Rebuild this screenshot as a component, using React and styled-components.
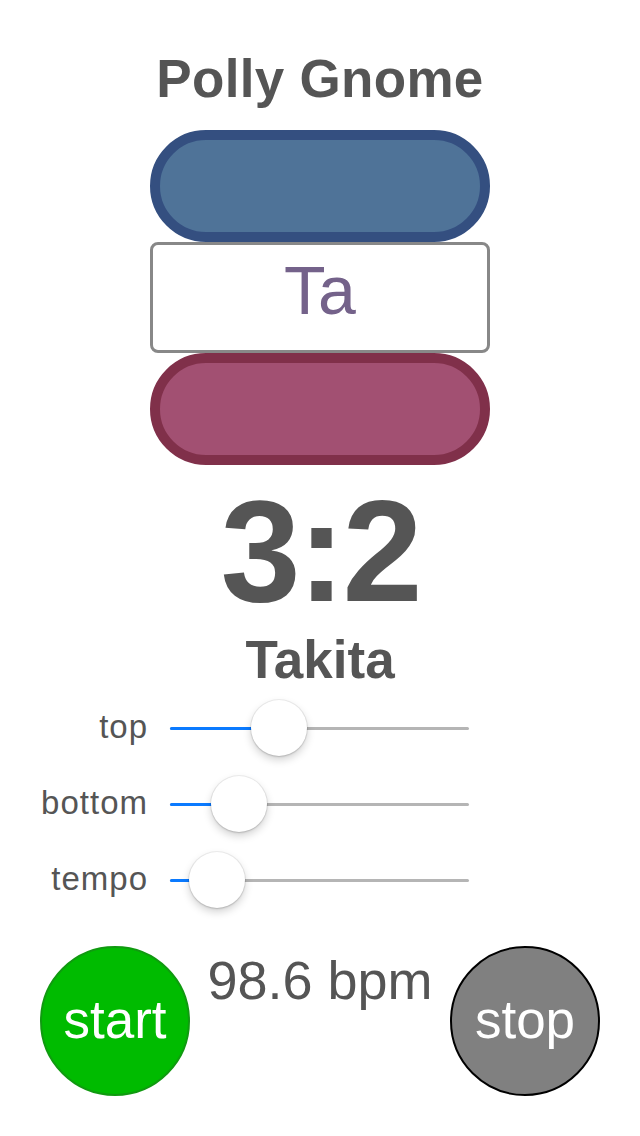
import React, { useState } from "react";
import styled, { createGlobalStyle } from "styled-components";

const GlobalStyle = createGlobalStyle`
  html, body {
    margin: 0;
    padding: 0;
    background: #ffffff;
  }
  body {
    font-family: "Liberation Sans", Arial, sans-serif;
  }
`;

const Screen = styled.div`
  width: 640px;
  height: 1136px;
  display: flex;
  flex-direction: column;
  align-items: center;
  box-sizing: border-box;
  padding-top: 52px;
  overflow: hidden;
`;

const Title = styled.h1`
  margin: 0;
  font-size: 53px;
  line-height: 53px;
  font-weight: bold;
  color: #555555;
  letter-spacing: 0.3px;
`;

const Stack = styled.div`
  width: 340px;
  margin-top: 25px;
  display: flex;
  flex-direction: column;
`;

const Pill = styled.div`
  height: 112px;
  box-sizing: border-box;
  border-radius: 56px;
  border: 10px solid ${(props) => props.edge};
  background: ${(props) => props.fill};
`;

const SyllableBox = styled.div`
  height: 111px;
  box-sizing: border-box;
  border: 3px solid #888888;
  border-radius: 8px;
  padding-top: 11px;
  text-align: center;
  font-size: 68px;
  line-height: 68px;
  color: #74628a;
`;

const Ratio = styled.div`
  margin-top: 15px;
  font-size: 144px;
  line-height: 144px;
  font-weight: bold;
  color: #555555;
  letter-spacing: -3px;
`;

const PatternName = styled.div`
  margin-top: 9px;
  font-size: 53px;
  line-height: 53px;
  font-weight: bold;
  color: #555555;
`;

const Sliders = styled.div`
  margin-top: 4px;
  width: 640px;
  display: flex;
  flex-direction: column;
`;

const SliderRow = styled.div`
  height: 76px;
  display: grid;
  grid-template-columns: 148px 299px;
  column-gap: 22px;
  align-items: center;
`;

const SliderLabel = styled.span`
  text-align: right;
  font-size: 33px;
  line-height: 33px;
  letter-spacing: 1px;
  color: #555555;
  margin-top: -4px;
`;

const Track = styled.div`
  position: relative;
  height: 3px;
  border-radius: 2px;
  background: #b5b5b5;
`;

const TrackFill = styled.div`
  position: absolute;
  left: 0;
  top: 0;
  height: 3px;
  border-radius: 2px;
  background: #0a7aff;
`;

const Thumb = styled.div`
  position: absolute;
  top: -27px;
  width: 56px;
  height: 56px;
  margin-left: -28px;
  border-radius: 50%;
  background: #ffffff;
  box-shadow: 0 0 0 1px rgba(0, 0, 0, 0.06), 0 4px 8px rgba(0, 0, 0, 0.18),
    0 1px 2px rgba(0, 0, 0, 0.12);
`;

const Controls = styled.div`
  margin-top: 28px;
  width: 640px;
  box-sizing: border-box;
  padding: 0 40px;
  display: flex;
  justify-content: space-between;
  align-items: flex-start;
`;

const RoundButton = styled.button`
  width: 150px;
  height: 150px;
  box-sizing: border-box;
  border-radius: 50%;
  border: ${(props) => (props.variant === "start" ? "2px solid #109a10" : "2px solid #000000")};
  background: ${(props) => (props.variant === "start" ? "#00bb00" : "#808080")};
  color: #ffffff;
  font-family: "Liberation Sans", Arial, sans-serif;
  font-size: 53px;
  padding: 0 0 4px 0;
  display: flex;
  align-items: center;
  justify-content: center;
  cursor: pointer;
`;

const Tempo = styled.div`
  margin-top: 7px;
  font-size: 54px;
  line-height: 54px;
  color: #555555;
`;

const TRAVEL = 299 - 56;

function Slider({ label, value }) {
  const center = 28 + value * TRAVEL;
  return (
    <SliderRow>
      <SliderLabel>{label}</SliderLabel>
      <Track>
        <TrackFill style={{ width: center + "px" }} />
        <Thumb style={{ left: center + "px" }} />
      </Track>
    </SliderRow>
  );
}

export default function App() {
  const [running, setRunning] = useState(false);

  return (
    <Screen>
      <GlobalStyle />
      <Title>Polly Gnome</Title>
      <Stack>
        <Pill fill="#4f7398" edge="#344f80" />
        <SyllableBox>Ta</SyllableBox>
        <Pill fill="#a25072" edge="#80304a" />
      </Stack>
      <Ratio>3:2</Ratio>
      <PatternName>Takita</PatternName>
      <Sliders>
        <Slider label="top" value={0.333} />
        <Slider label="bottom" value={0.169} />
        <Slider label="tempo" value={0.078} />
      </Sliders>
      <Controls>
        <RoundButton variant="start" onClick={() => setRunning(true)}>
          start
        </RoundButton>
        <Tempo>98.6 bpm</Tempo>
        <RoundButton variant="stop" onClick={() => setRunning(false)}>
          stop
        </RoundButton>
      </Controls>
    </Screen>
  );
}
